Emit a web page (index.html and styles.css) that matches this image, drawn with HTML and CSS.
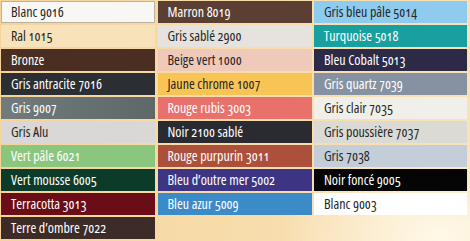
FILE: index.html
```html
<!DOCTYPE html>
<html lang="fr">
<head>
<meta charset="utf-8">
<title>Nuancier RAL</title>
<link rel="stylesheet" href="styles.css">
</head>
<body>
<div class="chart">
  <div class="col">
    <div class="sw c-9016 dark-t bordered">Blanc 9016</div>
    <div class="sw c-1015 dark-t">Ral 1015</div>
    <div class="sw c-bronze">Bronze</div>
    <div class="sw c-7016">Gris antracite 7016</div>
    <div class="sw c-9007">Gris 9007</div>
    <div class="sw c-alu dark-t">Gris Alu</div>
    <div class="sw c-6021">Vert pâle 6021</div>
    <div class="sw c-6005">Vert mousse 6005</div>
    <div class="sw c-3013">Terracotta 3013</div>
    <div class="sw c-7022">Terre d’ombre 7022</div>
  </div>
  <div class="col">
    <div class="sw c-8019">Marron 8019</div>
    <div class="sw c-2900 dark-t">Gris sablé 2900</div>
    <div class="sw c-1000 dark-t">Beige vert 1000</div>
    <div class="sw c-1007 dark-t">Jaune chrome 1007</div>
    <div class="sw c-3003">Rouge rubis 3003</div>
    <div class="sw c-2100">Noir 2100 sablé</div>
    <div class="sw c-3011">Rouge purpurin 3011</div>
    <div class="sw c-5002">Bleu d’outre mer 5002</div>
    <div class="sw c-5009">Bleu azur 5009</div>
  </div>
  <div class="col">
    <div class="sw c-5014 dark-t">Gris bleu pâle 5014</div>
    <div class="sw c-5018">Turquoise 5018</div>
    <div class="sw c-5013">Bleu Cobalt 5013</div>
    <div class="sw c-7039">Gris quartz 7039</div>
    <div class="sw c-7035 dark-t">Gris clair 7035</div>
    <div class="sw c-7037 dark-t">Gris poussière 7037</div>
    <div class="sw c-7038 dark-t">Gris 7038</div>
    <div class="sw c-9005">Noir foncé 9005</div>
    <div class="sw c-9003 dark-t">Blanc 9003</div>
  </div>
</div>
</body>
</html>
```
FILE: styles.css
```css
html, body {
  margin: 0;
  padding: 0;
}
body {
  width: 470px;
  height: 241px;
  overflow: hidden;
  background:
    radial-gradient(ellipse 160px 90px at 440px 235px, rgba(255, 250, 236, 0.95), rgba(255, 250, 236, 0) 100%),
    linear-gradient(90deg, #f5d39a 0%, #f7dcaa 45%, #f9e2b8 100%);
  font-family: "Open Sans", "Liberation Sans", sans-serif;
  font-stretch: 78%;
  font-weight: 500;
  font-variant-numeric: oldstyle-nums;
}
.chart {
  display: grid;
  grid-template-columns: 154px 154px 153px;
  column-gap: 2.5px;
  padding: 1px 0 0 1px;
  align-items: start;
}
.col {
  display: flex;
  flex-direction: column;
  gap: 2px;
}
.sw {
  height: 22px;
  line-height: 22px;
  padding-left: 10px;
  font-size: 14px;
  color: #ffffff;
  white-space: nowrap;
  box-sizing: border-box;
}
.dark-t { color: #262626; }
.bordered {
  border: 1px solid #b9b3a6;
  line-height: 20px;
  padding-left: 9px;
}
.c-9016 { background: #f8f7f3; }
.c-1015 { background: #f8e2b9; }
.c-bronze { background: #4b2e22; }
.c-7016 { background: #2b2e32; }
.c-9007 { background: linear-gradient(90deg, #717b7c, #5e6868); }
.c-alu { background: #d9d8d6; }
.c-6021 { background: #8bc67e; }
.c-6005 { background: #0d3b29; }
.c-3013 { background: #6b0d16; }
.c-7022 { background: #3c2b27; }
.c-8019 { background: #5c3f33; }
.c-2900 { background: #e6e2dd; }
.c-1000 { background: #efc9b9; }
.c-1007 { background: #f8c455; }
.c-3003 { background: #e8716c; }
.c-2100 { background: #2a2b30; }
.c-3011 { background: #ad503b; }
.c-5002 { background: #3d3584; }
.c-5009 { background: #3b8bc9; }
.c-5014 { background: #8fcbee; }
.c-5018 { background: #17a09f; }
.c-5013 { background: #2c2a46; }
.c-7039 { background: #8692a1; }
.c-7035 { background: #f0efea; }
.c-7037 { background: #dcdad4; }
.c-7038 { background: #c4ced8; }
.c-9005 { background: #050505; }
.c-9003 { background: #ffffff; }
```
